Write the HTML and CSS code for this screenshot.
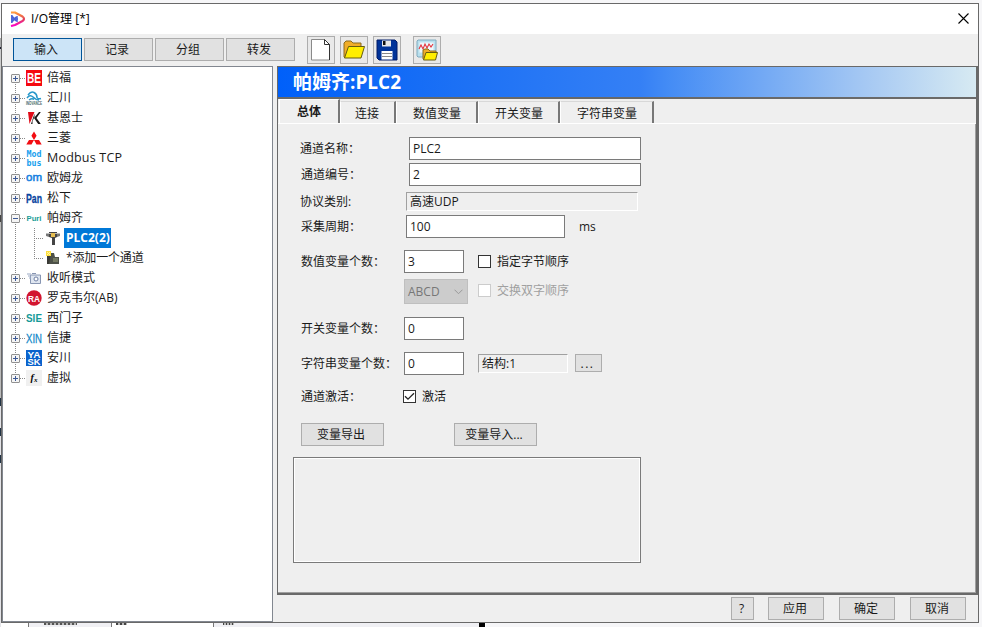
FILE: index.html
```html
<!DOCTYPE html>
<html lang="zh-CN">
  <head>
    <meta charset="UTF-8" />
    <title>I/O管理</title>
    <link rel="stylesheet" href="styles.css">
  </head>
  <body>
    <div class="window">
      <header class="titlebar">
        <svg class="logo" width="16" height="16" viewBox="0 0 16 16">
          <defs>
            <linearGradient id="lg" x1="0" y1="1" x2="0" y2="0">
              <stop offset="0" stop-color="#ff00c8" />
              <stop offset=".5" stop-color="#e0405a" />
              <stop offset="1" stop-color="#ff9a3c" />
            </linearGradient>
          </defs>
          <path d="M1 1.500L5 1.500L12.500 5.500Q15.500 8 12.500 10L5 14L1 15" fill="none" stroke="url(#lg)" stroke-width="2.200" stroke-linejoin="round" />
          <path d="M1.800 4v8M7 5v6M1 8h7M2 5l4 5M2 11l4-5" fill="none" stroke="#4a63d8" stroke-width="1.500" />
        </svg>
        <h1>I/O管理 [*]</h1>
        <svg class="close" width="11" height="11" viewBox="0 0 11 11">
          <path d="M.5 .5l10 10M10.500 .5l-10 10" stroke="#000" stroke-width="1.100" />
        </svg>
      </header>

      <div class="toolbar">
        <button class="btn mode active">输入</button>
        <button class="btn mode">记录</button>
        <button class="btn mode">分组</button>
        <button class="btn mode">转发</button>
        <button class="btn tool first">
          <svg width="22" height="22" viewBox="0 0 22 22">
            <path d="M1.500 .5h13l5 5v15.500h-18z" fill="#fff" stroke="#8a8a8a" />
            <path d="M14.500 .5v5h5M14.500 .5l5 5V21" fill="none" stroke="#333" />
          </svg>
        </button>
        <button class="btn tool">
          <svg width="22" height="22" viewBox="0 0 22 22">
            <path d="M1 18V4l2-2h5l2 2h8v4H6L2 19z" fill="#f0ad28" stroke="#8a6a1c" />
            <path d="M5.500 7.500h16L18 19H1.500z" fill="#ffee00" stroke="#665c10" />
          </svg>
        </button>
        <button class="btn tool">
          <svg width="22" height="22" viewBox="0 0 22 22">
            <path d="M1 1h18l2 2v18H3l-2-2z" fill="#003399" stroke="#001b66" />
            <path d="M6 1.500h9v6H6z" fill="#e8e8e8" />
            <path d="M7 2h2.500v4H7z" fill="#111" />
            <path d="M5.500 12h11v8.500h-11z" fill="#fff" />
            <path d="M6 14.500h10M6 17.500h10" stroke="#888" />
          </svg>
        </button>
        <button class="btn tool last">
          <svg width="22" height="22" viewBox="0 0 22 22">
            <path d="M1 2l1-1h18v15l-2 2H2l-1-1z" fill="#b9e0ee" stroke="#80aabe" />
            <path d="M3.500 3.500h14v10h-14z" fill="#eef8fc" />
            <path d="M3 10l2-4 2 4 2-5 2 4 2-4 2 3 2-3" fill="none" stroke="#e3343d" stroke-width="1.100" />
            <path d="M7 20v-9l2-1h3l2 2h6v3" fill="#f0ad28" stroke="#8a6a1c" />
            <path d="M10 13.500h11.500l-2 7.500H7.500z" fill="#ffee00" stroke="#665c10" />
          </svg>
        </button>
      </div>

      <div class="main">
        <ul class="tree">
          <li class="node first">
            <i class="exp"></i>
            <svg class="ico" viewBox="0 0 16 16"><path d="M0 0h16v16H0z" fill="#f5090f" /><text x="8" y="13" textLength="14" lengthAdjust="spacingAndGlyphs" class="t b" font-size="14" fill="#fff">BE</text></svg>
            <span>倍福</span>
          </li>
          <li class="node">
            <i class="exp"></i>
            <svg class="ico" viewBox="0 0 16 16">
              <path d="M2 5q3-4 6-2.500t3 5q1 2 4 1M1 8q3-4 6-1t6 3M3 10q3-2 5-.5" fill="none" stroke="#2697ca" stroke-width="1.500" />
              <text x="8" y="15" textLength="16" lengthAdjust="spacingAndGlyphs" class="t b" font-size="4.500" fill="#466">INOVANCE</text>
            </svg>
            <span>汇川</span>
          </li>
          <li class="node">
            <i class="exp"></i>
            <svg class="ico" viewBox="0 0 16 16">
              <path d="M2 2h6.500L3.500 14z" fill="#e00b18" />
              <path d="M13 2h1.800L10.500 8l4.300 6h-2.600L8 8z" fill="#181818" />
              <path d="M8.500 3.500V7L6.500 11v3H5z" fill="#181818" />
            </svg>
            <span>基恩士</span>
          </li>
          <li class="node">
            <i class="exp"></i>
            <svg class="ico" viewBox="0 0 16 16"><path d="M8 1.500l2.600 4.300L8 10 5.400 5.800zM8 10l-2.500 4.500H.3L3 10zM8 10h5l2.700 4.500h-5.200z" fill="#f20d12" /></svg>
            <span>三菱</span>
          </li>
          <li class="node">
            <i class="exp"></i>
            <svg class="ico" viewBox="0 0 16 16"><text x="8" y="7" textLength="15" lengthAdjust="spacingAndGlyphs" class="t mono" font-size="8.500" fill="#18a0ee">Mod</text><text x="8" y="15.500" textLength="15" lengthAdjust="spacingAndGlyphs" class="t mono" font-size="8.500" fill="#18a0ee">bus</text></svg>
            <span class="wide">Modbus TCP</span>
          </li>
          <li class="node">
            <i class="exp"></i>
            <svg class="ico" viewBox="0 0 16 16"><text x="8" y="11" textLength="16" lengthAdjust="spacingAndGlyphs" class="t" font-size="11" fill="#1680df" stroke="#1680df" stroke-width=".5">om</text></svg>
            <span>欧姆龙</span>
          </li>
          <li class="node">
            <i class="exp"></i>
            <svg class="ico" viewBox="0 0 16 16"><text x="8" y="13" textLength="16" lengthAdjust="spacingAndGlyphs" class="t b" font-size="13" fill="#0b459f" stroke="#0b459f" stroke-width=".3">Pan</text></svg>
            <span>松下</span>
          </li>
          <li class="node">
            <i class="exp open"></i>
            <svg class="ico" viewBox="0 0 16 16"><text x="8" y="11" textLength="15" lengthAdjust="spacingAndGlyphs" class="t b" font-size="7" fill="#1b9d98">Puri</text></svg>
            <span>帕姆齐</span>
          </li>
          <li class="node child">
            <svg class="ico" viewBox="0 0 16 16">
              <path d="M1 3h14v3l-3 1H4L1 6z" fill="#777" />
              <path d="M4 2h8v5l-2 1v7H7V8L4 7z" fill="#444" />
              <path d="M6 3h4v4H6z" fill="#e5bd52" />
              <path d="M1 3.500h5M10 3.500h5" stroke="#bbb" />
            </svg>
            <b class="selected">PLC2(2)</b>
          </li>
          <li class="node child end">
            <svg class="ico" viewBox="0 0 16 16">
              <path d="M2 4h6v10H2z" fill="#3a3a36" />
              <path d="M6 3h3l1 4h4v7H4z" fill="#4d5148" />
              <path d="M8 9h5M8 11h5" stroke="#9aa07c" />
              <path d="M1 1h5v5H1z" fill="#ffdf3b" />
              <path d="M2 2l3 3M5 2L2 5" stroke="#fff6a8" />
            </svg>
            <span>*添加一个通道</span>
          </li>
          <li class="node">
            <i class="exp"></i>
            <svg class="ico" viewBox="0 0 16 16">
              <path d="M4.500 5h10v8.500h-10z" fill="#dfe6f0" stroke="#8795b2" />
              <path d="M6 3.500h4" stroke="#8795b2" />
              <circle cx="10" cy="9" r="2" fill="#fff" stroke="#6f7fa4" />
              <path d="M1 4h4M2 6h3M3 8h2" stroke="#9caac4" />
            </svg>
            <span>收听模式</span>
          </li>
          <li class="node">
            <i class="exp"></i>
            <svg class="ico" viewBox="0 0 16 16"><circle cx="8" cy="8" r="7.700" fill="#d2152f" /><text x="8" y="11.500" textLength="12" lengthAdjust="spacingAndGlyphs" class="t b" font-size="9.500" fill="#fff">RA</text></svg>
            <span>罗克韦尔(AB)</span>
          </li>
          <li class="node">
            <i class="exp"></i>
            <svg class="ico" viewBox="0 0 16 16"><text x="8" y="12" textLength="16" lengthAdjust="spacingAndGlyphs" class="t b" font-size="11" fill="#159a98">SIE</text></svg>
            <span>西门子</span>
          </li>
          <li class="node">
            <i class="exp"></i>
            <svg class="ico" viewBox="0 0 16 16"><text x="8" y="13" textLength="16" lengthAdjust="spacingAndGlyphs" class="t" font-size="13.500" fill="#1389c9" stroke="#1389c9" stroke-width=".3">XIN</text></svg>
            <span>信捷</span>
          </li>
          <li class="node">
            <i class="exp"></i>
            <svg class="ico" viewBox="0 0 16 16"><path d="M0 0h16v16H0z" fill="#0b62cc" /><text x="8" y="7.500" textLength="13" lengthAdjust="spacingAndGlyphs" class="t b" font-size="8.500" fill="#fff">YA</text><text x="8" y="15.200" textLength="13" lengthAdjust="spacingAndGlyphs" class="t b" font-size="8.500" fill="#fff">SK</text></svg>
            <span>安川</span>
          </li>
          <li class="node last">
            <i class="exp"></i>
            <svg class="ico" viewBox="0 0 16 16"><path d="M0 0h16v16H0z" fill="#f0f0f0" /><text x="8" y="11" class="t b i" font-size="10" fill="#000">f<tspan font-size="7" dy="1">x</tspan></text></svg>
            <span>虚拟</span>
          </li>
        </ul>

        <div class="side">
          <section class="panel">
            <h2>帕姆齐:PLC2</h2>
            <nav class="tabs">
              <a class="tab current">总体</a>
              <a class="tab link">连接</a>
              <a class="tab">数值变量</a>
              <a class="tab">开关变量</a>
              <a class="tab string">字符串变量</a>
            </nav>
            <form class="form">
              <div class="row name">
                <label>通道名称：</label>
                <input class="field long" type="text" value="PLC2">
              </div>
              <div class="row number">
                <label>通道编号：</label>
                <input class="field long" type="text" value="2">
              </div>
              <div class="row protocol">
                <label>协议类别:</label>
                <output class="readonly long">高速UDP</output>
              </div>
              <div class="row cycle">
                <label>采集周期：</label>
                <input class="field" type="text" value="100">
                <span class="unit">ms</span>
              </div>
              <div class="row values">
                <label>数值变量个数：</label>
                <input class="field short" type="text" value="3">
                <span class="check"></span>
                <span>指定字节顺序</span>
              </div>
              <div class="row order">
                <label></label>
                <div class="select">
                  ABCD
                  <svg width="9" height="6" viewBox="0 0 9 6"><path d="M.5 .7l4 4 4-4" fill="none" stroke="#999" /></svg>
                </div>
                <span class="check off"></span>
                <span class="muted">交换双字顺序</span>
              </div>
              <div class="row switches">
                <label>开关变量个数：</label>
                <input class="field short" type="text" value="0">
              </div>
              <div class="row strings">
                <label>字符串变量个数：</label>
                <input class="field short" type="text" value="0">
                <output class="readonly struct">结构:1</output>
                <button class="btn more" type="button">...</button>
              </div>
              <div class="row enable">
                <label>通道激活：</label>
                <span class="check">
                  <svg width="11" height="11" viewBox="0 0 11 11"><path d="M1 5.200l3 3L10 2.200" fill="none" stroke="#222" stroke-width="1.300" /></svg>
                </span>
                <span>激活</span>
              </div>
              <div class="row actions">
                <button class="btn wide-btn" type="button">变量导出</button>
                <button class="btn wide-btn" type="button">变量导入...</button>
              </div>
              <div class="output"></div>
            </form>
          </section>
          <footer class="buttons">
            <button class="btn help">?</button>
            <button class="btn">应用</button>
            <button class="btn">确定</button>
            <button class="btn">取消</button>
          </footer>
        </div>
      </div>
    </div>
    <!-- 窗口下方露出的后台界面 -->
    <div class="behind">
      <i class="cell a"></i><i class="cell b1"></i><i class="cell c"></i><i class="bar"></i>
    </div>
  </body>
</html>
```
FILE: styles.css
```css
/* 全局样式 */
* {
  box-sizing: border-box;
  margin: 0;
  padding: 0;
}
body {
  width: 982px;
  height: 627px;
  padding: 3px 3px 0 1px;
  overflow: hidden;
  /* 左边缘露出的后台界面 */
  background: linear-gradient(#f6f6f8 38px, #aaa 38px 47px, #223 47px 49px, #ccc 49px 215px, #444 215px 222px, #bbb 222px 398px,
    #234 398px 406px, #e4e4e8 406px 428px, #234 428px 436px, #e4e4e8 436px 455px, #234 455px 463px, #e4e4e8 463px) 0 0 / 1px 100% no-repeat, #f6f6f8;
  font: 12px/16px "Open Sans", "Noto Sans CJK SC", sans-serif;
  color: #1a1a1a;
}
svg {
  display: block;
  flex: none;
}
.window {
  width: 978px;
  height: 620px;
  display: flex;
  flex-direction: column;
  background: #efefef;
  border: 1px solid #696969;
}
/* 标题栏 */
.titlebar {
  height: 30px;
  flex: none;
  display: flex;
  align-items: center;
  padding: 0 9px 1px 8px;
  background: #fff;
}
.titlebar h1 {
  margin-left: 5px;
  flex: 1;
  font-size: 12px;
  font-weight: normal;
  color: #000;
}
.btn {
  display: flex;
  align-items: center;
  justify-content: center;
  height: 23px;
  padding: 1px 2px 0 0;
  background: #e1e1e1;
  border: 1px solid #adadad;
  font: inherit;
  color: inherit;
}
/* 工具栏 */
.toolbar {
  height: 32px;
  flex: none;
  display: flex;
  align-items: center;
  gap: 2px;
  padding: 0 0 0 11px;
}
.mode {
  width: 69px;
  margin-top: -1px;
  padding-right: 3px;
}
.mode.active {
  background: #cce4f7;
  border-color: #005499;
}
.tool {
  width: 28px;
  height: 28px;
  margin-right: 3px;
  padding: 0;
  background: #e9e9e9;
}
.tool.first {
  margin-left: 10px;
}
.tool.last {
  margin-left: 7px;
}
.main {
  flex: 1;
  min-height: 0;
  display: flex;
}
/* 设备树 */
.tree {
  width: 271px;
  padding: 1px 0 0 8px;
  background: #fff;
  border: 1px solid #828790;
  list-style: none;
}
.node {
  height: 20px;
  display: flex;
  align-items: center;
  white-space: nowrap;
  /* 竖向虚线 */
  background: repeating-linear-gradient(#888 0 1px, #fff 1px 2px) 4px 0 / 1px 100% no-repeat,
    repeating-linear-gradient(90deg, #888 0 1px, #fff 1px 2px) 9px 10px / 6px 1px no-repeat;
}
.node.first {
  background-position: 4px 10px, 9px 10px;
}
.node.last {
  background-size: 1px 10px, 6px 1px;
}
.exp {
  width: 9px;
  height: 9px;
  margin-top: 1px;
  border: 1px solid #919191;
  border-radius: 1px;
  background: linear-gradient(#3e5a95, #3e5a95) 1px 3px / 5px 1px no-repeat,
    linear-gradient(#3e5a95, #3e5a95) 3px 1px / 1px 5px no-repeat, #f5f5f5;
}
.exp.open {
  background: linear-gradient(#3e5a95, #3e5a95) 1px 3px / 5px 1px no-repeat, #f5f5f5;
}
.ico {
  width: 16px;
  height: 16px;
  margin: 0 5px 0 6px;
  overflow: visible;
}
.node .wide {
  font-size: 12.500px;
  letter-spacing: .2px;
}
.t {
  font-family: "Liberation Sans", sans-serif;
  text-anchor: middle;
}
.b {
  font-weight: bold;
}
.mono {
  font-family: "DejaVu Sans Mono", monospace;
  font-weight: bold;
}
.i {
  font-family: "Liberation Serif", serif;
  font-style: italic;
}
.node.child {
  padding-left: 28px;
  background: repeating-linear-gradient(#888 0 1px, #fff 1px 2px) 4px 0 / 1px 100% no-repeat,
    repeating-linear-gradient(#888 0 1px, #fff 1px 2px) 23px 0 / 1px 100% no-repeat,
    repeating-linear-gradient(90deg, #888 0 1px, #fff 1px 2px) 23px 10px / 10px 1px no-repeat;
}
.node.child.end {
  background-size: 1px 100%, 1px 10px, 10px 1px;
}
.node.child .ico {
  margin-right: 3px;
}
.node.child span {
  padding-left: 2px;
  letter-spacing: -.15px;
}
.selected {
  width: 47px;
  height: 20px;
  padding-left: 2px;
  overflow: hidden;
  line-height: 19px;
  color: #fff;
  background: #0078d7;
}
/* 右侧面板 */
.side {
  width: 701px;
  margin-left: 4px;
}
.panel {
  height: 529px;
  border: solid #696969;
  border-width: 1px 2px 2px 1px;
}
.panel h2 {
  height: 32px;
  padding-left: 15px;
  border-bottom: 2px solid #696969;
  background: linear-gradient(90deg, #0060fa, #1b70f5 25%, #3580f5 52%, #448cf5 56%, #a5c8f3 84%, #d7eaf2);
  font-size: 19px;
  line-height: 30px;
  color: #fff;
}
.tabs {
  height: 25px;
  display: flex;
  align-items: flex-end;
  padding-left: 1px;
  border-bottom: 1px solid #fff;
}
.tab {
  width: 82px;
  height: 22px;
  padding: 3px 0 0 1px;
  border-top: 1px solid #d8d8d8;
  border-left: 1px solid #fff;
  border-right: 2px solid #777;
  text-align: center;
  line-height: 18px;
}
.tab.current {
  width: 61px;
  height: 24px;
  padding: 0;
  border-top-color: #fff;
  font-weight: bold;
  line-height: 23px;
}
.tab.link {
  width: 56px;
  padding: 3px 1px 0 0;
}
.tab.string {
  width: 94px;
}
/* 表单 */
.form {
  height: 469px;
  padding: 13px 0 0 23px;
  border-right: 1px solid #a0a0a0;
  border-bottom: 1px solid #a0a0a0;
}
.row {
  height: 23px;
  display: flex;
  align-items: center;
}
.row label {
  width: 103px;
  flex: none;
  padding-top: 1px;
  white-space: nowrap;
}
.row.name label,
.row.number label {
  width: 108px;
}
.row.name label {
  margin-left: -1px;
  width: 109px;
}
.row.protocol label {
  margin-left: -1px;
  padding: 0;
  width: 106px;
}
.row.cycle label {
  width: 105px;
}
.field {
  width: 159px;
  height: 23px;
  padding: 0 3px 1px;
  border: 1px solid #7a7a7a;
  background: #fff;
  font: inherit;
  color: inherit;
}
.long {
  width: 232px;
}
.short {
  width: 60px;
}
.readonly {
  height: 19px;
  padding-left: 3px;
  border: 1px solid #a0a0a0;
  border-right-color: #fff;
  border-bottom-color: #fff;
  line-height: 18px;
}
.number {
  margin-top: 3px;
}
.protocol {
  margin-top: 4px;
}
.cycle {
  margin-top: 2px;
}
.values {
  margin-top: 12px;
}
.order {
  height: 25px;
  margin-top: 6px;
}
.switches {
  margin-top: 13px;
}
.strings {
  margin-top: 12px;
}
.enable {
  margin-top: 10px;
}
.row.enable label {
  width: 102px;
}
.actions {
  margin-top: 15px;
  gap: 70px;
}
.unit {
  margin-left: 14px;
}
.check {
  width: 13px;
  height: 13px;
  margin-right: 6px;
  border: 1px solid #333;
  background: #fff;
}
.field + .check {
  margin-left: 14px;
}
.select + .check {
  margin: -2px 6px 0 10px;
}
.check.off {
  border-color: #ccc;
}
.muted {
  margin-top: -2px;
  color: #a0a0a0;
}
.select {
  width: 64px;
  height: 25px;
  display: flex;
  align-items: center;
  justify-content: space-between;
  padding: 0 4px 0 3px;
  border: 1px solid #bfbfbf;
  background: #ccc;
  color: #777;
}
.struct {
  width: 90px;
  margin-left: 14px;
}
.more {
  width: 27px;
  height: 18px;
  margin: -1px 0 0 7px;
  letter-spacing: 1.500px;
  line-height: 12px;
}
.wide-btn {
  width: 83px;
  padding-right: 3px;
}
.output {
  width: 348px;
  height: 106px;
  margin: 11px 0 0 -8px;
  border: 1px solid #7a7a7a;
  box-shadow: inset 0 0 0 1px #fff;
}
.buttons {
  display: flex;
  justify-content: flex-end;
  gap: 15px;
  padding: 2px 12px 0 0;
}
.buttons .btn {
  width: 56px;
}
.buttons .help {
  width: 23px;
  margin-right: -1px;
}
/* 后台界面残影 */
.behind {
  height: 4px;
  display: flex;
  padding-left: 24px;
  background: linear-gradient(90deg, #fff 485px, #f6f6f8 485px);
}
.cell {
  width: 83px;
  border-left: 1px solid #777;
  /* 被遮住的文字下缘 */
  background: repeating-linear-gradient(90deg, #555 0 2px, #bbb 2px 4px) 15px 0 / 33px 2px no-repeat, #f0f0f4;
}
.cell.a {
  margin-left: 3px;
}
.cell.b1 {
  width: 102px;
  background: repeating-linear-gradient(90deg, #444 0 2px, #bbb 2px 4px) 4px 0 / 11px 2px no-repeat, #fff;
}
.cell.c {
  width: 266px;
  background: repeating-linear-gradient(90deg, #444 0 1px, #bbb 1px 3px) 9px 0 / 11px 2px no-repeat, #f0f0f4;
}
.bar {
  width: 6px;
  background: #000;
}
```
